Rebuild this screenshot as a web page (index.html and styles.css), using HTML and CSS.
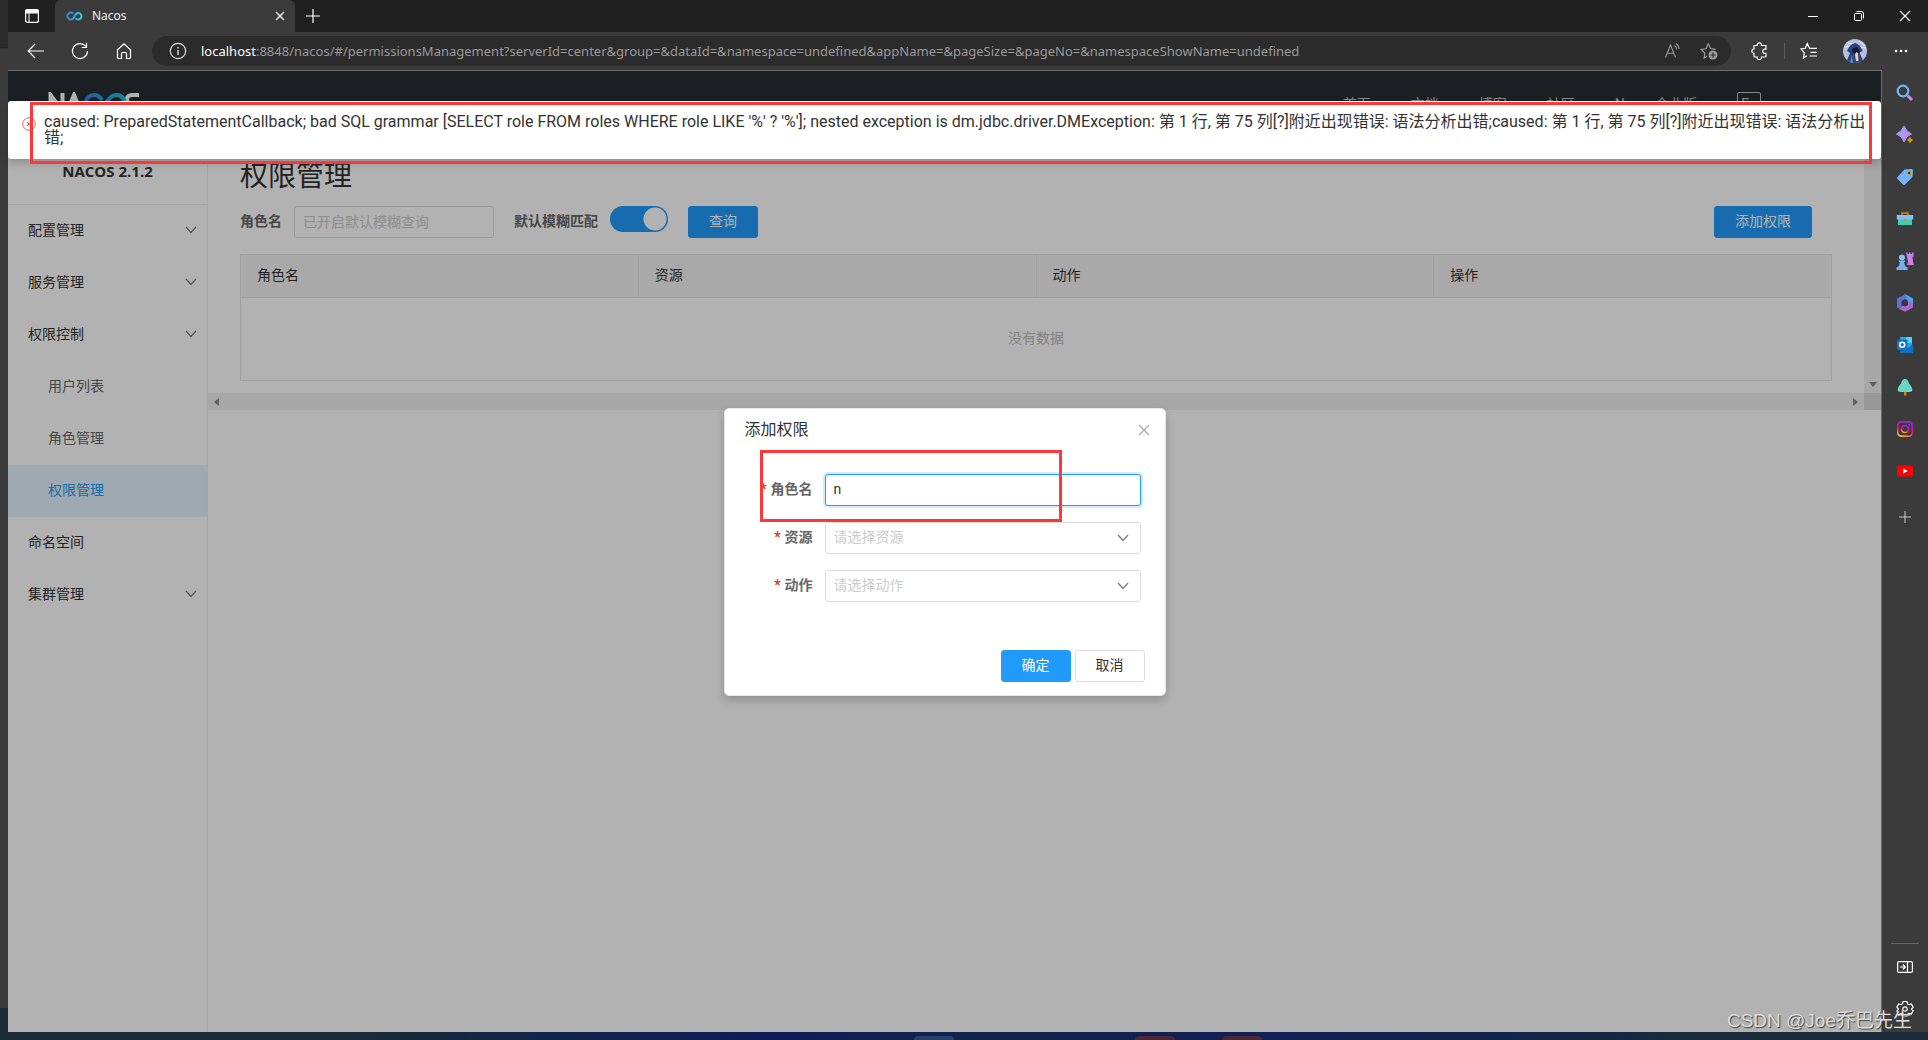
FILE: index.html
```html
<!DOCTYPE html>
<html lang="zh-CN">
<head>
<meta charset="utf-8">
<title>Nacos</title>
<link rel="stylesheet" href="styles.css">
</head>
<body>
<div class="desktop">
  <div class="behind"></div>
  <div class="browser">
    <div class="tabstrip">
      <button class="tab-actions" aria-label="标签页操作"><svg width="16" height="16" viewBox="0 0 16 16"><rect x="1.6" y="1.6" width="12.8" height="12.8" rx="2" fill="none" stroke="#fff" stroke-width="1.2"/><path d="M1.6 2h12.8v3H1.600zM5 5v9" fill="#fff" stroke="#fff"/></svg></button>
      <div class="tab">
        <svg width="18" height="10" viewBox="0 0 18 10"><defs><linearGradient id="lg"><stop offset="0" stop-color="#3f7fe0"/><stop offset="1" stop-color="#1fd0e0"/></linearGradient></defs><path d="M8 2.500A3.300 3.300 0 1 0 8 7.500L11 3A3.200 3.200 0 1 1 10.500 7" fill="none" stroke="url(#lg)" stroke-width="2"/></svg>
        <span class="tab-title">Nacos</span>
        <button class="tab-close" aria-label="关闭标签页"><svg width="10" height="10" viewBox="0 0 10 10"><path d="M1 1l8 8M9 1l-8 8" stroke="#fff" stroke-width="1.300"/></svg></button>
      </div>
      <button class="new-tab" aria-label="新建标签页"><svg width="16" height="16" viewBox="0 0 16 16"><path d="M8 1v14M1 8h14" stroke="#fff" stroke-width="1.200"/></svg></button>
      <div class="window-controls">
        <button aria-label="最小化"><svg width="12" height="12" viewBox="0 0 12 12"><path d="M1 6.500h10" stroke="#fff"/></svg></button>
        <button aria-label="还原"><svg width="12" height="12" viewBox="0 0 12 12"><rect x="1.500" y="3.500" width="7" height="7" rx="1" fill="none" stroke="#fff"/><path d="M3.500 1.500h5q2 0 2 2v5" fill="none" stroke="#fff"/></svg></button>
        <button aria-label="关闭"><svg width="12" height="12" viewBox="0 0 12 12"><path d="M1 1l10 10M11 1L1 11" stroke="#fff" stroke-width="1.200"/></svg></button>
      </div>
    </div>

    <div class="toolbar">
      <div class="nav-buttons">
        <button aria-label="后退"><svg width="18" height="16" viewBox="0 0 18 16"><path d="M17 8H1.500M8 1L1.200 8 8 15" fill="none" stroke="#fff" stroke-width="1.200"/></svg></button>
        <button aria-label="刷新"><svg width="18" height="18" viewBox="0 0 18 18"><path d="M16.500 9A7.500 7.500 0 1 1 14.800 4.300M15.500.8v4.700h-4.700" fill="none" stroke="#fff" stroke-width="1.200"/></svg></button>
        <button aria-label="主页"><svg width="16" height="18" viewBox="0 0 16 18"><path d="M1.500 7.800L8 1.700l6.500 6.100V15.500q0 1-1 1H10.500v-5q0-1-1-1H6.500q-1 0-1 1v5H2.500q-1 0-1-1z" fill="none" stroke="#fff" stroke-width="1.200"/></svg></button>
      </div>
      <div class="omnibox">
        <svg class="info" width="18" height="18" viewBox="0 0 18 18"><circle cx="9" cy="9" r="7.700" fill="none" stroke="#ddd" stroke-width="1.200"/><path d="M9 8v5M9 5v1.500" stroke="#ddd" stroke-width="1.400"/></svg>
        <span class="url"><b>localhost</b>:8848/nacos/#/permissionsManagement?serverId=center&amp;group=&amp;dataId=&amp;namespace=undefined&amp;appName=&amp;pageSize=&amp;pageNo=&amp;namespaceShowName=undefined</span>
        <button aria-label="大声朗读"><svg width="18" height="18" viewBox="0 0 18 18"><path d="M1.500 15.500L6.500 3l5 12.500M3.300 11.300h6.500M10.500 3.500q2 1.500 2 4M12 1.500q3 2 3 5.500" fill="none" stroke="#9a9a9a" stroke-width="1.100"/></svg></button>
        <button aria-label="收藏此页"><svg width="18" height="18" viewBox="0 0 18 18"><path d="M7 14.200L4.200 16l.6-5L1.200 7.300l4.900-.8L8.300 1.800l2.300 4.700 5 .8" fill="none" stroke="#9a9a9a" stroke-width="1.200"/><circle cx="13" cy="13" r="4.500" fill="#9a9a9a"/><path d="M13 10.500v5M10.500 13h5" stroke="#2b2b2b" stroke-width="1.200"/></svg></button>
      </div>
      <div class="toolbar-end">
        <button aria-label="扩展"><svg width="18" height="18" viewBox="0 0 18 18"><path d="M3 3.500h3.200a2.200 2.200 0 1 1 4.300 0H15v3.700h-1.200a2 2 0 1 0 0 4.100H15V14q0 1-1 1h-3.500a2.200 2.200 0 1 1-4.300 0H4q-1 0-1-1v-2.700a2.100 2.100 0 1 1 0-4.300z" fill="none" stroke="#fff" stroke-width="1.200"/></svg></button>
        <i class="sep"></i>
        <button aria-label="收藏夹"><svg width="18" height="18" viewBox="0 0 18 18"><path d="M6.800 13.700L3.500 16l.8-5.200L1 7l4.300-.7L7.300 1.500l2.200 4.800H17M10.500 10.300H17M9.500 14H17" fill="none" stroke="#fff" stroke-width="1.200"/></svg></button>
        <button class="profile" aria-label="个人资料"><svg width="24" height="24" viewBox="0 0 24 24"><clipPath id="av"><circle cx="12" cy="12" r="12"/></clipPath><g clip-path="url(#av)"><path d="M0 0h24v24H0z" fill="#b5bde0"/><path d="M2 3l7 2M1 8l6-1M16 2l6 5M17 8l6 1" stroke="#eef"/><path d="M12 4q5 1 7.500 8l-3 1.500L21 24H3l4-10-3-2q3-7 8-8z" fill="#294475"/><path d="M9 10l5-2 3 5-3 2-4-1z" fill="#0f1935"/><path d="M13 13l2 1 .5 8h-2.500l-1-6z" fill="#f0c9c5"/><path d="M9 16l-2 8h3z" fill="#6a8ad0"/></g></svg></button>
        <button aria-label="设置及其他"><svg width="14" height="4" viewBox="0 0 14 4"><g fill="#fff"><circle cx="2" cy="2" r="1.300"/><circle cx="7" cy="2" r="1.300"/><circle cx="12" cy="2" r="1.300"/></g></svg></button>
      </div>
    </div>

    <div class="window-body">
      <div class="viewport">
        <header class="site-header">
          <svg class="logo" width="92" height="24" viewBox="0 0 92 24"><defs><linearGradient id="lg2" gradientUnits="userSpaceOnUse" x1="35" y1="0" x2="78" y2="0"><stop offset="0" stop-color="#3a7de8"/><stop offset="1" stop-color="#12cadb"/></linearGradient></defs><g fill="none" stroke="#fff" stroke-width="4"><path d="M2.500 22V3l12 16V1M18 22L26 3l8 19"/><path d="M91 3H84Q79 3 79 7.500t5 4.500h2q4 0 4 4t-4 4H78"/><path d="M54 8Q51 3 46 3a8.500 8.500 0 0 0 0 17q4 0 7-4l8-9q3-4 7-4a8.500 8.500 0 1 1-6 14" stroke="url(#lg2)"/></g></svg>
          <nav class="site-nav">
            <a href="#">首页</a><a href="#">文档</a><a href="#">博客</a><a href="#">社区</a><a href="#">Nacos企业版</a>
            <button class="lang">En</button>
          </nav>
        </header>
        <div class="console">
          <aside class="sidebar">
            <div class="version">NACOS 2.1.2</div>
            <ul class="menu">
              <li><a href="#">配置管理<svg width="12" height="8" viewBox="0 0 12 8"><path d="M1 1l5 5.500L11 1"/></svg></a></li>
              <li><a href="#">服务管理<svg width="12" height="8" viewBox="0 0 12 8"><path d="M1 1l5 5.500L11 1"/></svg></a></li>
              <li><a href="#">权限控制<svg width="12" height="8" viewBox="0 0 12 8"><path d="M1 1l5 5.500L11 1"/></svg></a></li>
              <li><a class="sub" href="#">用户列表</a></li>
              <li><a class="sub" href="#">角色管理</a></li>
              <li><a class="sub active" href="#">权限管理</a></li>
              <li><a href="#">命名空间</a></li>
              <li><a href="#">集群管理<svg width="12" height="8" viewBox="0 0 12 8"><path d="M1 1l5 5.500L11 1"/></svg></a></li>
            </ul>
          </aside>
          <main class="main">
            <div class="scroll-area">
              <div class="content">
                <h1>权限管理</h1>
                <form class="filters">
                  <label for="role-filter">角色名</label>
                  <input id="role-filter" class="field" type="text" placeholder="已开启默认模糊查询">
                  <label for="fuzzy" class="fuzzy-label">默认模糊匹配</label>
                  <input id="fuzzy" class="switch" type="checkbox" checked>
                  <button type="button" class="btn primary">查询</button>
                  <button type="button" class="btn primary add">添加权限</button>
                </form>
                <table class="grid">
                  <thead><tr><th>角色名</th><th>资源</th><th>动作</th><th>操作</th></tr></thead>
                  <tbody><tr><td colspan="4">没有数据</td></tr></tbody>
                </table>
              </div>
              <div class="vbar"><svg width="8" height="5" viewBox="0 0 8 5"><path d="M0 0h8L4 5z"/></svg></div>
            </div>
            <div class="hbar">
              <div class="track"><svg width="5" height="8" viewBox="0 0 5 8"><path d="M5 0v8L0 4z"/></svg><svg width="5" height="8" viewBox="0 0 5 8"><path d="M0 0v8l5-4z"/></svg></div>
              <div class="corner"></div>
            </div>
          </main>
        </div>

        <div class="mask">
          <section class="dialog" role="dialog" aria-labelledby="dlg-title">
            <div class="dialog-head">
              <h2 id="dlg-title">添加权限</h2>
              <button class="dialog-close" aria-label="关闭"><svg width="12" height="12" viewBox="0 0 12 12"><path d="M1 1l10 10M11 1L1 11" stroke="#aaa" stroke-width="1.200"/></svg></button>
            </div>
            <form class="dialog-form">
              <div class="row"><label for="f-role">角色名</label><input id="f-role" class="field focus" type="text" value="n"></div>
              <div class="row"><label for="f-res">资源</label><div class="pick"><select id="f-res" class="field"><option>请选择资源</option></select><svg width="12" height="8" viewBox="0 0 12 8"><path d="M1 1l5 5.500L11 1"/></svg></div></div>
              <div class="row"><label for="f-act">动作</label><div class="pick"><select id="f-act" class="field"><option>请选择动作</option></select><svg width="12" height="8" viewBox="0 0 12 8"><path d="M1 1l5 5.500L11 1"/></svg></div></div>
            </form>
            <div class="dialog-foot"><button class="btn primary">确定</button><button class="btn normal">取消</button></div>
            <div class="note note-field"></div>
          </section>
        </div>

        <div class="toast" role="alert">
          <svg width="14" height="14" viewBox="0 0 14 14"><circle cx="7" cy="7" r="6.300" fill="none" stroke="#f0604d"/><path d="M4.800 4.800l4.400 4.400M9.200 4.800L4.800 9.200" stroke="#f0604d" stroke-width="1.200"/></svg>
          <p>caused: PreparedStatementCallback; bad SQL grammar [SELECT role FROM roles WHERE role LIKE '%' ? '%']; nested exception is dm.jdbc.driver.DMException: 第 1 行, 第 75 列[?]附近出现错误: 语法分析出错;caused: 第 1 行, 第 75 列[?]附近出现错误: 语法分析出错;</p>
        </div>
        <div class="note note-toast"></div>
      </div>

      <aside class="edge-bar">
        <button aria-label="搜索"><svg width="18" height="18" viewBox="0 0 18 18"><path d="M11.500 11.500l4.500 4.500" stroke="#c08df0" stroke-width="3"/><circle cx="7" cy="7" r="5.300" fill="none" stroke="#6bb4f7" stroke-width="2.200"/></svg></button>
        <button aria-label="发现"><svg width="18" height="18" viewBox="0 0 18 18"><defs><linearGradient id="sp" x2="1" y2="1"><stop offset="0" stop-color="#8fb2ff"/><stop offset="1" stop-color="#cf7df0"/></linearGradient></defs><path d="M8 0q1.800 5.500 7.500 8Q9.800 10 8 16 6.200 10 .500 8 6.200 5.500 8 0z" fill="url(#sp)" stroke="url(#sp)"/><path d="M14 10.500q.8 2.700 3.500 3.500-2.700.8-3.500 3.500-.8-2.700-3.500-3.500 2.700-.8 3.500-3.500z" fill="#d8950c"/></svg></button>
        <button aria-label="购物"><svg width="18" height="18" viewBox="0 0 18 18"><path d="M8.500 1.500L15.500 1q1.500 0 1.500 1.500L16.500 9 9 16.500q-1 1-2 0L1.500 11q-1-1 0-2z" fill="#74b2fa"/><circle cx="13.200" cy="5" r="1.700" fill="#4a3000" stroke="#d8950c"/></svg></button>
        <button aria-label="工具"><svg width="18" height="18" viewBox="0 0 18 18"><path d="M6 5V3h6v2" fill="none" stroke="#c98d12" stroke-width="1.500"/><path d="M2 9h14v6H2z" fill="#3fcdb9"/><path d="M.8 5h16.400v4.500H.8z" fill="#7fc0fa"/><circle cx="9" cy="10" r="1.500" fill="#d8950c"/></svg></button>
        <button aria-label="游戏"><svg width="18" height="18" viewBox="0 0 18 18"><path d="M10 .5h1.500v1.500H13V.5h1.500v1.500H16V.5h1.500v4L16.500 5l.5 5 1 3h-7l1-3z" fill="#cc80ec"/><circle cx="6" cy="5.500" r="3" fill="#82c2fb"/><path d="M3 8.500h6v1.500H8l1 4 2.500 1.500V18H.5v-2.500L3 14l1-4H3z" fill="#76aefa"/></svg></button>
        <button aria-label="Microsoft 365"><svg width="18" height="18" viewBox="0 0 18 18"><path d="M7 1.500L9.500.3 17 4.500v6L11.500 7.500V6L7 4z" fill="#4aa6ee"/><path d="M9 .5L1 4.500v9l4.500 2.500V7L11 3.500z" fill="#5a72d8"/><path d="M17 9v4.500L9 17.800 3.500 15 6.500 11.500l3 1L12 11V7.500z" fill="#a86ad0"/><path d="M9 6l3 1.700v3L9 12.300 6.300 10.700v-3z" fill="#3b3b3b"/></svg></button>
        <button aria-label="Outlook"><svg width="18" height="18" viewBox="0 0 18 18"><path d="M4 1h12v12H4z" fill="#28a8ea"/><path d="M10 1h6v6h-6z" fill="#50d0ff"/><path d="M4 9l6.500 4L17 8v9H4z" fill="#0f6fc0"/><rect x="1" y="3.500" width="10.500" height="10.500" rx="1" fill="#0a74d0"/><circle cx="6.200" cy="8.700" r="2.500" fill="none" stroke="#fff" stroke-width="1.600"/></svg></button>
        <button aria-label="放飞"><svg width="18" height="18" viewBox="0 0 18 18"><path d="M8 13h2.500v4.500H8z" fill="#c8861a"/><path d="M9 .8q3 .7 4 4.700 3.300 3.500 3.300 6 0 2.500-2.800 2.500h-9q-2.800 0-2.800-2.500 0-2.500 3.300-6Q6 1.500 9 .8z" fill="#67d6c4"/></svg></button>
        <button aria-label="Instagram"><svg width="18" height="18" viewBox="0 0 18 18"><defs><linearGradient id="ig" x1=".2" y1="1" x2=".6" y2="0"><stop offset="0" stop-color="#ffb52a"/><stop offset=".45" stop-color="#f5127c"/><stop offset="1" stop-color="#9028f0"/></linearGradient></defs><g fill="none" stroke="url(#ig)" stroke-width="1.700"><rect x="1.800" y="1.800" width="14.400" height="14.400" rx="3.500"/><circle cx="9" cy="9" r="3.500"/></g><circle cx="13.200" cy="4.800" r="1" fill="#d01fd0"/></svg></button>
        <button aria-label="YouTube"><svg width="18" height="18" viewBox="0 0 18 18"><rect x="1" y="3.500" width="16" height="11" rx="2.500" fill="#f00"/><path d="M7.300 6.500v5l4.500-2.500z" fill="#fff"/></svg></button>
        <button aria-label="添加"><svg width="18" height="18" viewBox="0 0 18 18"><path d="M9 3v12M3 9h12" stroke="#ccc"/></svg></button>
        <div class="edge-bottom">
          <button aria-label="隐藏侧栏"><svg width="18" height="18" viewBox="0 0 18 18"><rect x="1.600" y="3.600" width="14.800" height="10.800" rx="1.500" fill="none" stroke="#fff" stroke-width="1.200"/><path d="M11.500 4v10M4 9h5M7 6.500L9.300 9 7 11.500" fill="none" stroke="#fff" stroke-width="1.200"/></svg></button>
          <button aria-label="设置"><svg width="18" height="18" viewBox="0 0 18 18"><path d="M7 1.500h4l.5 2.300 1.500.9 2.300-.8 1.900 3.300L15.500 9l1.700 1.800-1.900 3.300-2.300-.8-1.500.9-.5 2.300H7l-.5-2.300-1.500-.9-2.300.8L.8 10.800 2.500 9 .8 7.200l1.900-3.300 2.300.8 1.500-.9z" fill="none" stroke="#fff" stroke-width="1.200" stroke-linejoin="round"/><circle cx="9" cy="9" r="2.200" fill="none" stroke="#fff" stroke-width="1.200"/></svg></button>
        </div>
      </aside>
    </div>
  </div>
  <div class="task task-a"></div><div class="task task-b"></div><div class="task task-c"></div>
  <div class="watermark">CSDN @Joe乔巴先生</div>
</div>
</body>
</html>
```
FILE: styles.css
```css
* { box-sizing: border-box; }
body {
  margin: 0;
  font: 14px/20px Roboto, "Noto Sans CJK SC", sans-serif;
  color: #333;
}
button, input, select { font: inherit; color: inherit; margin: 0; }
button { border: 0; padding: 0; background: none; }
h1, h2, p, ul { margin: 0; padding: 0; font-weight: normal; }
ul { list-style: none; }
a { color: inherit; text-decoration: none; }
svg { display: block; flex: none; }

.desktop {
  position: relative;
  display: flex;
  min-height: 100vh;
  padding: 0 0 8px 8px;
  overflow: hidden;
  background: linear-gradient(90deg, #1b2a36 0, #1b2a36 18%, #10254a 28%, #0e1c58 40%, #10254a 50%, #111f55 65%, #10254a 78%, #1c2b3a 90%);
}
.behind {
  position: absolute;
  inset: 0 auto 32px 0;
  width: 8px;
  background: linear-gradient(#2b2b2b 0, #2b2b2b 47px, #1f1f1f 47px, #3b3b3b 49px);
}
.browser { flex: 1; min-width: 0; display: flex; flex-direction: column; background: #3b3b3b; }

/* window frame */
.tabstrip { display: flex; height: 32px; background: #202020; }
.tab-actions { width: 47px; display: grid; place-items: center; }
.tab {
  width: 240px;
  display: flex;
  align-items: center;
  gap: 9px;
  padding: 0 9px 0 10px;
  background: #3b3b3b;
  border-radius: 6px 6px 0 0;
  color: #fff;
  font: 12px/16px "Open Sans", sans-serif;
}
.tab-title { flex: 1; }
.tab-close { width: 12px; display: grid; place-items: center; }
.new-tab { width: 36px; display: grid; place-items: center; }
.window-controls { margin-left: auto; display: flex; }
.window-controls button { width: 46px; display: grid; place-items: center; }
.toolbar { display: flex; align-items: center; height: 38px; }
.nav-buttons { display: flex; width: 144px; padding-left: 6px; }
.nav-buttons button { width: 44px; display: grid; place-items: center; }
.omnibox {
  flex: 1;
  min-width: 0;
  height: 30px;
  display: flex;
  align-items: center;
  gap: 18px;
  padding: 0 13px 0 17px;
  border-radius: 15px;
  background: #2b2b2b;
}
.url {
  flex: 1;
  margin-left: -4px;
  white-space: nowrap;
  overflow: hidden;
  color: #9a9a9a;
  font: 13px/20px "Noto Sans", sans-serif;
}
.url b { color: #fff; font-weight: normal; }
.toolbar-end { display: flex; align-items: center; width: 197px; padding-left: 20px; }
.toolbar-end .sep { width: 1px; height: 16px; margin: 0 15px; background: #5c5c5c; }
.profile { margin: 0 27px 0 25px; }

.window-body { flex: 1; display: flex; }
.viewport {
  position: relative;
  flex: 1;
  min-width: 0;
  display: flex;
  flex-direction: column;
  border: solid #6c6c6c;
  border-width: 1px 1px 0 0;
  background: #fff;
}
.edge-bar {
  width: 46px;
  display: flex;
  flex-direction: column;
  align-items: center;
  gap: 24px;
  padding: 14px 0;
}
.edge-bar > button:nth-of-type(11) { margin-top: 4px; }
.edge-bottom {
  margin-top: auto;
  width: 28px;
  display: flex;
  flex-direction: column;
  align-items: center;
  gap: 24px;
  padding-top: 14px;
  border-top: 1px solid #666;
}

/* Nacos console */
.site-header {
  height: 66px;
  display: flex;
  align-items: center;
  justify-content: space-between;
  padding: 0 120px 0 40px;
  background: #272b31;
  color: #fff;
}
.site-nav { display: flex; align-items: center; gap: 40px; color: #c2c4c6; }
.lang { width: 24px; height: 24px; border: 1px solid #c2c4c6; border-radius: 2px; }
.console { flex: 1; display: flex; }
.sidebar { width: 200px; border-right: 1px solid #eee; }
.version {
  height: 68px;
  padding-top: 24px;
  border-bottom: 1px solid #eee;
  text-align: center;
  color: #333;
  font: bold 15px/20px "Open Sans", sans-serif;
}
.menu a {
  display: flex;
  align-items: center;
  justify-content: space-between;
  height: 52px;
  padding: 0 10px 2px 20px;
}
.menu svg, .pick svg { fill: none; stroke: #777; stroke-width: 1.2; }
.menu .sub { padding-left: 40px; color: #666; }
.menu .active { background: #e4f3fe; color: #209bfa; }
.main { flex: 1; min-width: 0; }
.scroll-area { display: flex; }
.content { flex: 1; min-width: 0; padding: 20px 32px 12px; }
.content h1 { font-size: 28px; line-height: 40px; }
.filters { display: flex; align-items: center; gap: 12px; padding: 9px 20px 16px 0; }
.filters label { padding-bottom: 2px; font-weight: bold; color: #666; }
.field {
  height: 32px;
  padding: 0 8px;
  border: 1px solid #ddd;
  border-radius: 3px;
  background: #fff;
  outline: 0;
}
.field::placeholder { color: #ccc; opacity: 1; }
.filters .field { width: 200px; }
.filters .fuzzy-label { margin-left: 8px; }
.switch {
  appearance: none;
  width: 58px;
  height: 26px;
  border-radius: 13px;
  background: radial-gradient(circle at 45px 13px, #fff 11px, #209bfa 12px);
  align-self: flex-start;
}
.btn { height: 32px; padding: 0 20px 2px; border: 1px solid #209bfa; border-radius: 3px; }
.filters .btn { margin-left: 8px; }
.filters .add { margin-left: auto; }
.primary { background: #209bfa; color: #fff; }
.normal { border-color: #ddd; background: #fff; }
.grid { width: 100%; border-collapse: collapse; table-layout: fixed; border: 1px solid #e6e6e6; }
.grid th {
  height: 43px;
  padding: 0 16px 2px;
  border: 1px solid #e6e6e6;
  background: #f2f2f2;
  text-align: left;
  font-weight: normal;
}
.grid td { height: 83px; padding: 0 0 3px; text-align: center; color: #bbb; }
.vbar, .track { background: #f0f0f0; }
.vbar { width: 17px; display: flex; align-items: flex-end; justify-content: center; padding-bottom: 6px; }
.vbar svg, .track svg { fill: #888; }
.hbar { display: flex; height: 17px; }
.track { flex: 1; display: flex; align-items: center; justify-content: space-between; padding: 0 6px; }
.corner { width: 17px; background: #dcdcdc; }

/* overlays */
.mask {
  position: absolute;
  inset: 0;
  display: grid;
  place-items: center;
  background: rgba(0, 0, 0, .3);
}
.dialog {
  position: relative;
  width: 442px;
  border: 1px solid #e6e6e6;
  border-radius: 5px;
  background: #fff;
  box-shadow: 0 4px 10px rgba(0, 0, 0, .2);
}
.dialog-head { display: flex; align-items: center; justify-content: space-between; padding: 9px 15px 9px 20px; }
.dialog-head h2 { font-size: 16px; line-height: 24px; }
.dialog-form { display: flex; flex-direction: column; gap: 16px; padding: 23px 24px 48px 32px; }
.row { display: flex; align-items: center; gap: 12px; }
.row label { width: 56px; flex: none; padding-bottom: 2px; white-space: nowrap; display: flex; justify-content: flex-end; font-weight: bold; color: #666; }
.row label::before { content: "*"; margin-right: 4px; color: #d23c26; }
.row .field { width: 100%; padding-bottom: 2px; }
.focus { border-color: #209bfa; box-shadow: 0 0 0 2px rgba(32, 155, 250, .2); }
.pick { position: relative; flex: 1; }
.pick select { appearance: none; color: #ccc; }
.pick svg { position: absolute; right: 12px; top: 12px; }
.dialog-foot { display: flex; justify-content: flex-end; gap: 4px; padding: 0 20px 13px; }
.toast {
  position: absolute;
  inset: 30px 0 auto 0;
  display: flex;
  gap: 8px;
  padding: 13px 14px;
  border-radius: 3px;
  background: #fff;
  box-shadow: 0 4px 10px rgba(0, 0, 0, .2);
  font-size: 16px;
  line-height: 16px;
}
.toast svg { margin-top: 3px; }
.note { position: absolute; border: 3px solid #fd3838; pointer-events: none; }
.note-toast { inset: 31px 9px auto 22px; height: 62px; }
.note-field { left: 35px; top: 41px; width: 302px; height: 72px; }

.task { position: absolute; bottom: 0; width: 40px; height: 4px; border-radius: 4px 4px 0 0; background: #4a2636; }
.task-a { left: 914px; background: #28406f; }
.task-b { left: 1135px; }
.task-c { left: 1222px; }
.watermark {
  position: absolute;
  right: 16px;
  bottom: 6px;
  color: #dcdcdc;
  font: 19px/26px "Liberation Sans", "Noto Sans CJK SC", sans-serif;
  text-shadow: 1px 1px 1px #444;
}
```
